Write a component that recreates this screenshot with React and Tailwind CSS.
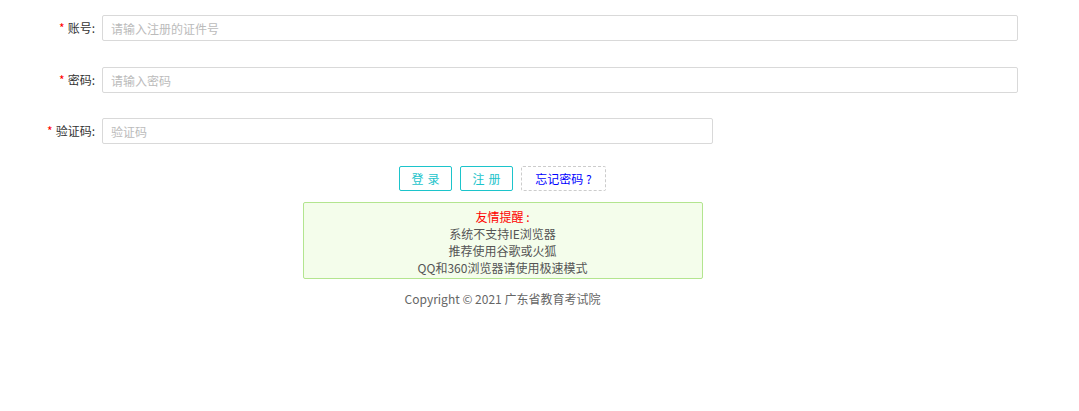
const fields = [
  { label: '账号', placeholder: '请输入注册的证件号', width: 'w-[916px]', mt: 'mt-0' },
  { label: '密码', placeholder: '请输入密码', width: 'w-[916px]', type: 'password', mt: 'mt-[26px]' },
  { label: '验证码', placeholder: '验证码', width: 'w-[611px]', mt: 'mt-[25px]' },
]

export default function App() {
  return (
    <div className="w-[1079px] h-[411px] bg-white text-[12px] text-[#333] font-['Noto_Sans_CJK_SC',sans-serif]">
      <div className="w-[1018px] pt-[15px]">
        {/* Form rows */}
        <div className="flex flex-col">
          {fields.map((f) => (
            <div key={f.label} className={`flex items-center ${f.mt}`}>
              <label className="w-[97px] shrink-0 pr-[2px] text-right text-[12px] text-[#333] leading-[26px]">
                <span className="text-[#f00] mr-[3px]">*</span>
                {f.label}:
              </label>
              <input
                type={f.type || 'text'}
                placeholder={f.placeholder}
                className={`${f.width} shrink-0 ml-[5px] h-[26px] border border-[#d9d9d9] rounded-[2px] px-[8px] text-[12px] outline-none placeholder:text-[#bbb]`}
              />
            </div>
          ))}
        </div>
      </div>

      <div className="w-[1005px]">
        {/* Buttons */}
        <div className="flex justify-center gap-[8px] mt-[22px]">
          <button className="w-[53px] h-[25px] border border-[#1cc4cb] rounded-[2px] text-[#1cc4cb] text-[12px] tracking-[4px] pl-[4px]">
            登录
          </button>
          <button className="w-[53px] h-[25px] border border-[#1cc4cb] rounded-[2px] text-[#1cc4cb] text-[12px] tracking-[4px] pl-[4px]">
            注册
          </button>
          <button className="w-[85px] h-[25px] border border-dashed border-[#ccc] rounded-[2px] text-[#00f] text-[12px]">
            忘记密码 ?
          </button>
        </div>

        {/* Notice */}
        <div className="flex justify-center mt-[11px]">
          <div className="w-[400px] h-[77px] border border-[#b3e58f] bg-[#f4fdeb] rounded-[2px] flex flex-col items-center pt-[5px] text-[12px] leading-[17px] text-[#555]">
            <p className="text-[#f00]">友情提醒 :</p>
            <p>系统不支持IE浏览器</p>
            <p>推荐使用谷歌或火狐</p>
            <p>QQ和360浏览器请使用极速模式</p>
          </div>
        </div>

        <p className="text-center text-[12px] text-[#666] mt-[11px]">Copyright © 2021 广东省教育考试院</p>
      </div>
    </div>
  )
}
